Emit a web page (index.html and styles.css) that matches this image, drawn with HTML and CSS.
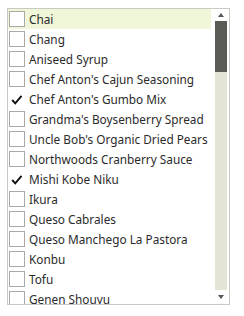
FILE: index.html
```html
<!DOCTYPE html>
<html>
<head>
<meta charset="utf-8">
<link rel="stylesheet" href="styles.css">
</head>
<body>
<div class="listbox">
  <ul class="items">
    <li class="item hover"><span class="box"></span><span class="label">Chai</span></li>
    <li class="item"><span class="box"></span><span class="label">Chang</span></li>
    <li class="item"><span class="box"></span><span class="label">Aniseed Syrup</span></li>
    <li class="item"><span class="box"></span><span class="label">Chef Anton's Cajun Seasoning</span></li>
    <li class="item"><span class="box checked"><svg viewBox="0 0 16 16" width="16" height="16"><path d="M2.5 8 L6 11.8 L13.2 3.4" fill="none" stroke="#111" stroke-width="2.2"/></svg></span><span class="label">Chef Anton's Gumbo Mix</span></li>
    <li class="item"><span class="box"></span><span class="label">Grandma's Boysenberry Spread</span></li>
    <li class="item"><span class="box"></span><span class="label">Uncle Bob's Organic Dried Pears</span></li>
    <li class="item"><span class="box"></span><span class="label">Northwoods Cranberry Sauce</span></li>
    <li class="item"><span class="box checked"><svg viewBox="0 0 16 16" width="16" height="16"><path d="M2.5 8 L6 11.8 L13.2 3.4" fill="none" stroke="#111" stroke-width="2.2"/></svg></span><span class="label">Mishi Kobe Niku</span></li>
    <li class="item"><span class="box"></span><span class="label">Ikura</span></li>
    <li class="item"><span class="box"></span><span class="label">Queso Cabrales</span></li>
    <li class="item"><span class="box"></span><span class="label">Queso Manchego La Pastora</span></li>
    <li class="item"><span class="box"></span><span class="label">Konbu</span></li>
    <li class="item"><span class="box"></span><span class="label">Tofu</span></li>
    <li class="item"><span class="box"></span><span class="label">Genen Shouyu</span></li>
  </ul>
  <div class="scrollbar">
    <div class="arrow up"><span class="tri-up"></span></div>
    <div class="thumb"></div>
    <div class="track"></div>
    <div class="arrow down"><span class="tri-down"></span></div>
  </div>
</div>
</body>
</html>
```
FILE: styles.css
```css
html, body {
  margin: 0;
  padding: 0;
  background: #fff;
}
body {
  font-family: "Noto Sans", "Open Sans", sans-serif;
  font-size: 11.8px;
  color: #2b2b2b;
}
.listbox {
  margin: 8px 0 0 7px;
  width: 223px;
  height: 297px;
  box-sizing: border-box;
  border: 1px solid #c9cac2;
  display: flex;
  overflow: hidden;
}
.items {
  list-style: none;
  margin: 0;
  padding: 0;
  width: 203px;
  flex: none;
  overflow: hidden;
}
.item {
  height: 20px;
  display: flex;
  align-items: center;
  padding-left: 1px;
  white-space: nowrap;
}
.item.hover {
  background: #f0f7d9;
}
.box {
  width: 16px;
  height: 16px;
  box-sizing: border-box;
  border: 1px solid #a9a9a9;
  background: #fff;
  flex: none;
  display: flex;
}
.box.checked {
  border-color: transparent;
  background: transparent;
}
.label {
  margin-left: 4px;
  line-height: 20px;
}
.scrollbar {
  flex: none;
  width: 18px;
  box-sizing: border-box;
  padding: 0 2px 0 4px;
  display: flex;
  flex-direction: column;
}
.arrow {
  display: flex;
  justify-content: center;
}
.arrow.up {
  height: 12px;
  align-items: flex-start;
  padding-top: 4px;
  box-sizing: border-box;
}
.arrow.down {
  height: 14px;
  align-items: flex-start;
  padding-top: 5px;
  box-sizing: border-box;
}
.tri-up {
  width: 0;
  height: 0;
  border-left: 3.5px solid transparent;
  border-right: 3.5px solid transparent;
  border-bottom: 4px solid #555;
}
.tri-down {
  width: 0;
  height: 0;
  border-left: 3.5px solid transparent;
  border-right: 3.5px solid transparent;
  border-top: 4px solid #555;
}
.thumb {
  height: 51px;
  background: #5a5b55;
  flex: none;
}
.track {
  flex: 1;
  background: #e3e4d6;
}
```
